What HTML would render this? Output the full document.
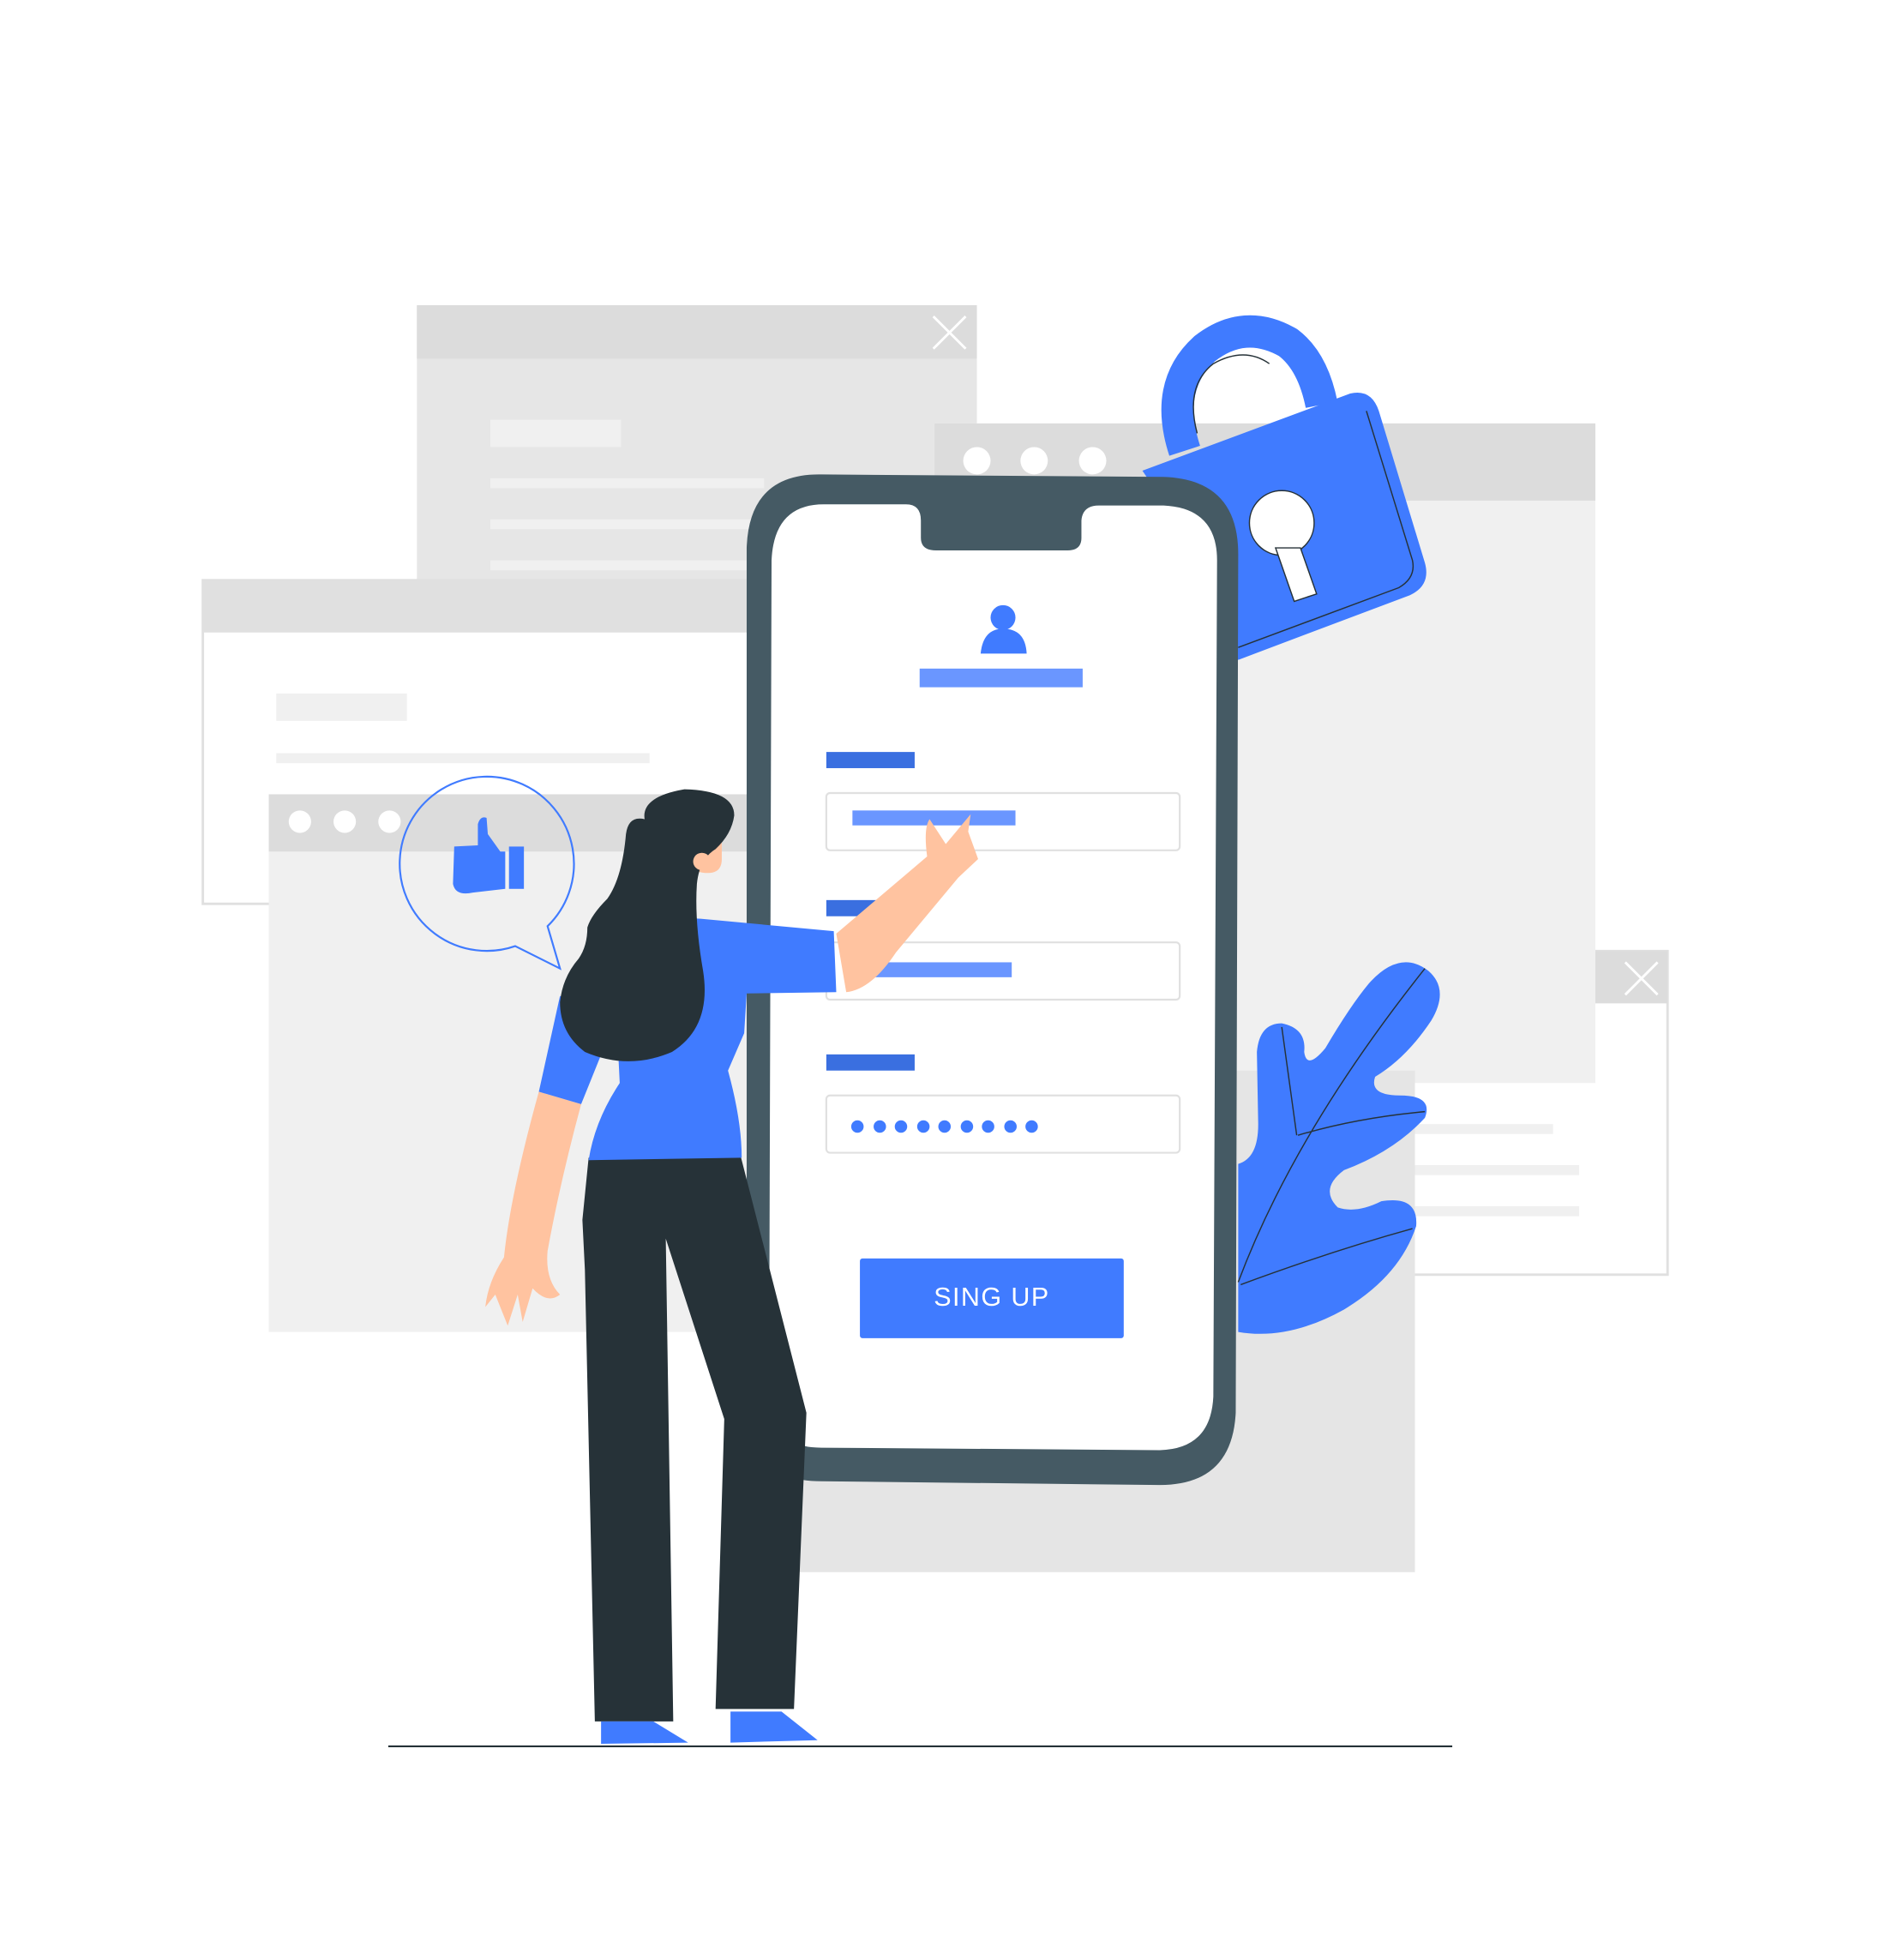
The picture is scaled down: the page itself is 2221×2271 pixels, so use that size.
<!DOCTYPE html>
<html><head><meta charset="utf-8"><style>
html,body{margin:0;padding:0;background:#fff;width:2221px;height:2271px;overflow:hidden}
svg{display:block}
</style></head><body>
<svg width="2221" height="2271" viewBox="0 0 1530 1564" xmlns="http://www.w3.org/2000/svg">
<rect width="1530" height="1564" fill="#fff"/>
<!-- small right window (behind) -->
<rect x="1136" y="764" width="204" height="260" fill="#fff" stroke="#e0e0e0" stroke-width="2"/>
<rect x="1282" y="764" width="58" height="42" fill="#dcdcdc"/>
<path d="M1306 773 L1332 799 M1332 773 L1306 799" stroke="#fff" stroke-width="2"/>
<rect x="1136" y="903" width="112" height="8" fill="#f0f0f0"/>
<rect x="1136" y="936" width="133" height="8" fill="#f0f0f0"/>
<rect x="1136" y="969" width="133" height="8" fill="#f0f0f0"/>
<!-- back window top -->
<rect x="335" y="245" width="450" height="240" fill="#e6e6e6"/>
<rect x="335" y="245" width="450" height="43" fill="#dcdcdc"/>
<path d="M750 254 L776 280 M776 254 L750 280" stroke="#fff" stroke-width="2"/>
<rect x="394" y="337" width="105" height="22" fill="#f0f0f0"/>
<rect x="394" y="384" width="220" height="8" fill="#f0f0f0"/>
<rect x="394" y="417" width="220" height="8" fill="#f0f0f0"/>
<rect x="394" y="450" width="220" height="8" fill="#f0f0f0"/>
<!-- right window -->
<rect x="751" y="340" width="531" height="530" fill="#f0f0f0"/>
<rect x="751" y="340" width="531" height="62" fill="#dcdcdc"/>
<circle cx="785" cy="370" r="11" fill="#fff"/><circle cx="831" cy="370" r="11" fill="#fff"/><circle cx="878" cy="370" r="11" fill="#fff"/>
<!-- bottom back window -->
<rect x="600" y="860" width="537" height="403" fill="#e5e5e5"/>
<!-- left white window -->
<rect x="163" y="466" width="440" height="260" fill="#fff" stroke="#e0e0e0" stroke-width="2"/>
<rect x="163" y="466" width="440" height="42" fill="#e0e0e0"/>
<rect x="222" y="557" width="105" height="22" fill="#f0f0f0"/>
<rect x="222" y="605" width="300" height="8" fill="#f0f0f0"/>
<!-- left grey window -->
<rect x="216" y="638" width="390" height="432" fill="#f0f0f0"/>
<rect x="216" y="638" width="390" height="46" fill="#dcdcdc"/>
<circle cx="241" cy="660" r="9" fill="#fff"/><circle cx="277" cy="660" r="9" fill="#fff"/><circle cx="313" cy="660" r="9" fill="#fff"/>
<!-- speech bubble -->
<path d="M440 744 A70 70 0 1 0 414 760 L450 778 Z" fill="none" stroke="#407bff" stroke-width="1.5"/>
<path d="M365 680 L384 679 L384 662 Q386 655 391 657 L392 670 L402 684 L406 684 L406 714 L380 717 Q366 720 364 710 Z" fill="#407bff"/>
<rect x="409" y="680" width="12" height="34" fill="#407bff"/>
<!-- lock -->
<path d="M952 362 Q935 310 968 280 Q1000 255 1035 275 Q1055 290 1062 325" fill="none" stroke="#407bff" stroke-width="26"/>
<path d="M962 348 Q952 310 975 292 Q1000 278 1020 292" fill="none" stroke="#263238" stroke-width="1"/>
<path d="M918 378 L1085 316 Q1102 312 1108 330 L1145 452 Q1150 470 1133 478 L995 530 L960 440 Z" fill="#407bff"/>
<path d="M1098 330 L1135 450 Q1138 464 1124 472 L995 520" fill="none" stroke="#263238" stroke-width="1"/>
<circle cx="1030" cy="420" r="26" fill="#fff" stroke="#263238"/>
<path d="M1025 440 L1040 483 L1058 477 L1045 440 Z" fill="#fff" stroke="#263238"/>
<!-- leaf -->
<path d="M995 935 Q1012 930 1011 900 L1010 845 Q1012 822 1030 822 Q1050 826 1048 845 Q1050 860 1065 842 Q1085 808 1100 790 Q1125 762 1148 780 Q1165 795 1150 820 Q1130 850 1105 865 Q1100 880 1125 880 Q1152 880 1145 898 Q1120 925 1080 940 Q1060 955 1075 970 Q1090 975 1110 965 Q1140 960 1138 985 Q1125 1025 1080 1052 Q1035 1077 995 1070 Z" fill="#407bff"/>
<path d="M995 1030 Q1040 910 1145 778 M1043 912 Q1090 898 1145 893 M997 1032 Q1070 1005 1135 987 M1042 912 L1030 825" fill="none" stroke="#263238" stroke-width="1"/>
<!-- phone -->
<path d="M660 381 L935 383 Q995 385 995 445 L993 1135 Q990 1193 932 1193 L660 1190 Q600 1190 600 1130 L600 440 Q602 380 660 381 Z" fill="#455a64"/>
<path d="M662 405 L728 405 Q740 405 740 418 L740 432 Q740 442 752 442 L858 442 Q869 442 869 432 L869 418 Q870 406 883 406 L935 406 Q978 408 978 450 L975 1122 Q973 1164 932 1165 L660 1163 Q618 1163 618 1122 L620 450 Q622 405 662 405 Z" fill="#fff"/>
<circle cx="806" cy="496" r="10" fill="#407bff"/>
<path d="M788 525 Q790 505 806 505 Q824 505 825 525 Z" fill="#407bff"/>
<rect x="739" y="537" width="131" height="15" fill="#6a96ff"/>
<rect x="664" y="604" width="71" height="13" fill="#3a6fe0"/>
<rect x="664" y="637" width="284" height="46" rx="3" fill="#fff" stroke="#e0e0e0" stroke-width="1.5"/>
<rect x="685" y="651" width="131" height="12" fill="#6a96ff"/>
<rect x="664" y="723" width="71" height="13" fill="#3a6fe0"/>
<rect x="664" y="757" width="284" height="46" rx="3" fill="#fff" stroke="#e0e0e0" stroke-width="1.5"/>
<rect x="690" y="773" width="123" height="12" fill="#6a96ff"/>
<rect x="664" y="847" width="71" height="13" fill="#3a6fe0"/>
<rect x="664" y="880" width="284" height="46" rx="3" fill="#fff" stroke="#e0e0e0" stroke-width="1.5"/>
<g fill="#407bff"><circle cx="689" cy="905" r="5"/><circle cx="707" cy="905" r="5"/><circle cx="724" cy="905" r="5"/><circle cx="742" cy="905" r="5"/><circle cx="759" cy="905" r="5"/><circle cx="777" cy="905" r="5"/><circle cx="794" cy="905" r="5"/><circle cx="812" cy="905" r="5"/><circle cx="829" cy="905" r="5"/></g>
<rect x="691" y="1011" width="212" height="64" rx="2" fill="#407bff"/>
<text x="797" y="1049" text-anchor="middle" font-family="Liberation Sans, sans-serif" font-size="21" fill="#fff" letter-spacing="1">SING UP</text>
<!-- ground -->
<line x1="312" y1="1403" x2="1167" y2="1403" stroke="#263238" stroke-width="1.5"/>
<!-- woman -->
<path d="M470 1020 L478 1383 L541 1383 L535 995 L582 1140 L575 1373 L638 1373 L648 1135 L595 928 L473 930 L468 980 Z" fill="#263238"/>
<path d="M483 1383 L525 1383 L553 1400 L483 1401 Z" fill="#407bff"/>
<path d="M587 1375 L628 1375 L657 1398 L587 1400 Z" fill="#407bff"/>
<path d="M433 877 Q410 960 405 1010 Q392 1030 390 1050 L398 1040 L408 1065 L416 1040 L420 1062 L428 1035 Q440 1048 450 1040 Q438 1028 440 1005 Q450 950 467 887 Z" fill="#ffc3a0"/>
<path d="M450 800 L433 877 L467 887 L490 830 Z" fill="#407bff"/>
<path d="M498 735 L563 738 L670 748 L672 797 L600 798 L598 830 L585 860 Q596 900 596 930 L473 932 Q478 900 498 870 L496 830 Z" fill="#407bff"/>
<path d="M672 750 L745 688 Q742 665 747 658 L760 678 L780 654 L778 668 L786 690 L770 705 L720 765 Q700 795 680 797 Z" fill="#ffc3a0"/>
<path d="M560 700 Q580 705 580 690 L580 670 L560 670 Z" fill="#ffc3a0"/>
<path d="M518 658 Q515 640 550 634 Q590 635 590 655 Q588 670 575 682 Q562 690 560 710 Q558 740 565 780 Q572 825 540 845 Q505 860 470 845 Q450 830 450 805 Q452 785 465 770 Q472 760 472 745 Q475 735 488 722 Q500 705 503 670 Q505 655 518 658 Z" fill="#263238"/>
<circle cx="564" cy="692" r="7" fill="#ffc3a0"/>
</svg>
</body></html>
